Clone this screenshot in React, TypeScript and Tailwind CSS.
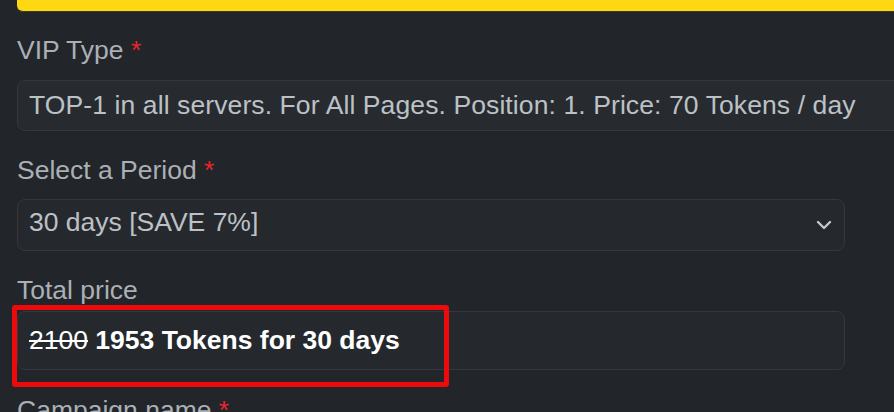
import React from 'react';

const Label = ({ text, required }: { text: string; required?: boolean }) => (
  <label className="block text-[26.5px] leading-[32px] text-[#aab0b6]">
    {text}
    {required && <span className="text-[#e8262d]"> *</span>}
  </label>
);

export default function App() {
  return (
    <div
      className="w-[894px] h-[412px] overflow-hidden bg-[#222529] pl-[17px]"
      style={{ fontFamily: '"Liberation Sans", Arial, sans-serif' }}
    >
      <div className="h-[12px] w-[900px] bg-[#fdd813] rounded-bl-[6px] border-b border-[#3b3a20]" />

      <div className="mt-[22px]">
        <Label text="VIP Type" required />
        <div className="mt-[14px] w-[900px] h-[51px] flex items-center px-[11px] rounded-[8px] border border-[#34383d] bg-[#272b30] text-[26.5px] tracking-[0.1px] text-[#bcc1c6] whitespace-nowrap">
          TOP-1 in all servers. For All Pages. Position: 1. Price: 70 Tokens / day
        </div>
      </div>

      <div className="mt-[23px]">
        <Label text="Select a Period" required />
        <div className="mt-[13px] w-[828px] h-[52px] flex items-center justify-between pl-[11px] pr-[12px] pb-[4px] rounded-[8px] border border-[#34383d] bg-[#25292d] text-[26.5px] text-[#bcc1c6]">
          <span>30 days [SAVE 7%]</span>
          <svg width="16" height="10" viewBox="0 0 16 10" fill="none" className="mt-[4px]">
            <path d="M2 2l6 6 6-6" stroke="#c3c7cb" strokeWidth="2.4" strokeLinecap="round" strokeLinejoin="round" />
          </svg>
        </div>
      </div>

      <div className="mt-[23px]">
        <Label text="Total price" />
        <div className="relative mt-[5px]">
          <div className="w-[828px] h-[59px] flex items-center px-[11px] rounded-[8px] border border-[#34383d] bg-[#25292d] text-[26.5px] text-white whitespace-nowrap">
            <span className="line-through">2100</span>
            <span className="font-bold">&nbsp;1953 Tokens for 30 days</span>
          </div>
          <div className="absolute left-[-5px] top-[-6px] w-[437px] h-[82px] border-[5px] border-[#ee0a0a] rounded-[3px] pointer-events-none" />
        </div>
      </div>

      <div className="mt-[24px]">
        <Label text="Campaign name" required />
      </div>
    </div>
  );
}
